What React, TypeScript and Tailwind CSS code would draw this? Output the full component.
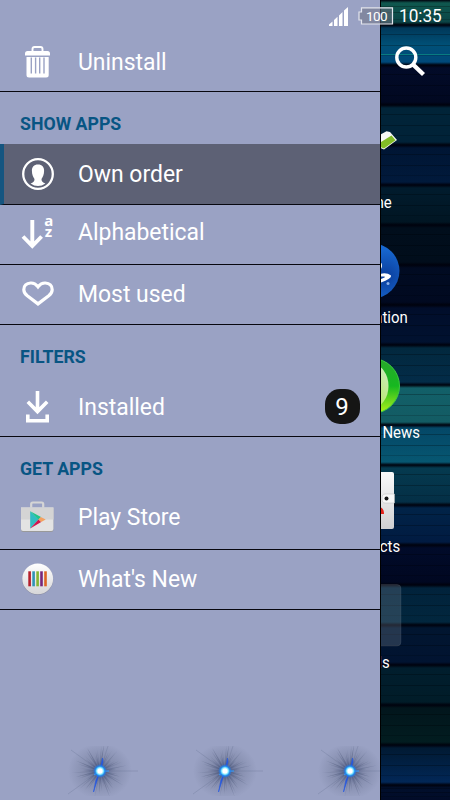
import React, { FC, ReactNode } from "react";

const TrashIcon = (
  <svg width="26" height="32" viewBox="0 0 26 32" fill="#fff">
    <path d="M7.500 5.500V3Q7.500 1 9.500 1H15.500Q17.500 1 17.500 3V5.500" fill="none" stroke="#fff" strokeWidth="1.900" />
    <path d="M2.500 5H22.500Q25 5 25 7.500V9.500H0V7.500Q0 5 2.500 5Z" />
    <path
      fillRule="evenodd"
      d="M1.500 11H23.700V29Q23.700 31.500 21.200 31.500H4Q1.500 31.500 1.500 29ZM5.600 11.500V27.500H7V11.500ZM9.900 11.500V27.500H11.300V11.500ZM14 11.500V27.500H15.400V11.500ZM18.300 11.500V27.500H19.700V11.500Z"
    />
  </svg>
);

const PersonIcon = (
  <svg width="32" height="32" viewBox="0 0 32 32" fill="#fff">
    <circle cx="16" cy="16" r="14.800" fill="none" stroke="#fff" strokeWidth="2.300" />
    <path d="M16 6.500C11.900 6.500 9.800 9.200 9.900 12.800C9.900 16.800 11.300 19.300 12.500 21C12.700 23.500 11.200 24.400 8.600 25.500Q12 28 16 28Q20 28 23.400 25.500C20.800 24.400 19.300 23.500 19.500 21C20.700 19.300 22.100 16.800 22.100 12.800C22.200 9.200 20.100 6.500 16 6.500Z" />
  </svg>
);

const SortIcon = (
  <svg width="34" height="34" viewBox="0 0 34 34" fill="none" stroke="#fff">
    <path d="M11.300 5V31M2 21.500L11.300 31L20.600 21.500" strokeWidth="3.900" />
    <text x="23.300" y="10.800" fill="#fff" stroke="none" fontSize="15" fontWeight="700" fontFamily="Noto Sans, sans-serif">a</text>
    <text x="23.700" y="22" fill="#fff" stroke="none" fontSize="15" fontWeight="700" fontFamily="Noto Sans, sans-serif">z</text>
  </svg>
);

const HeartIcon = (
  <svg width="32" height="26" viewBox="0 0 32 26" fill="none" stroke="#fff" strokeWidth="3.200">
    <path d="M16 5.800C13.500 2.600 11.200 1.800 8.600 2C4.500 2.300 1.700 4.700 1.800 8.700C1.900 11.300 3.300 13.200 5.300 14.800L16 22.900L26.700 14.800C28.700 13.200 30.100 11.300 30.200 8.700C30.300 4.700 27.500 2.300 23.400 2C20.800 1.800 18.500 2.600 16 5.800Z" />
  </svg>
);

const DownloadIcon = (
  <svg width="24" height="32" viewBox="0 0 24 32" fill="none" stroke="#fff" strokeWidth="3.600">
    <path d="M11.500 0V20.500M1.800 10.800L11.500 20.600L21.200 10.800" />
    <path d="M1.800 23.500V29.800H21.200V23.500" />
  </svg>
);

const PlayStoreIcon = (
  <svg width="34" height="32" viewBox=".8 .5 34 32">
    <path d="M11 7V3.500Q11 2 12.500 2H21.500Q23 2 23 3.500V7" fill="none" stroke="#d5d5d5" strokeWidth="2.200" />
    <path d="M.8 8H33.200V29Q33.200 31.500 30.700 31.500H3.300Q.8 31.500 .8 29Z" fill="#999" />
    <path d="M.8 7H33.200V28.500Q33.200 30.500 31.200 30.500H2.800Q.8 30.500 .8 28.500Z" fill="#e3e3e3" />
    <path d="M.8 7H33.200V19H.8Z" fill="#d4d4d4" />
    <path d="M10 10.800V28L18.500 19Z" fill="#30bdc2" />
    <path d="M10 10.800L20.800 16.600L18.300 19.200Z" fill="#20c58b" />
    <path d="M10 28L18.300 19.100L21 21.500Z" fill="#d0164f" />
    <path d="M20.600 16.500L25.500 19.100L21 21.600L18.200 19.100Z" fill="#f3a160" />
  </svg>
);

const WhatsNewIcon = (
  <svg width="32" height="32" viewBox="0 0 32 32">
    <defs>
      <linearGradient id="disc" x2="0" y2="1">
        <stop stopColor="#fff" />
        <stop offset="1" stopColor="#d6d6d8" />
      </linearGradient>
    </defs>
    <circle cx="15.700" cy="16.400" r="15.400" fill="#85889d" />
    <circle cx="15.700" cy="15.800" r="15.400" fill="url(#disc)" />
    <rect x="6.300" y="8.300" width="2.600" height="15" fill="#b51f2b" />
    <rect x="10.300" y="8.300" width="2.600" height="15" fill="#3193b6" />
    <rect x="14.300" y="8.300" width="2.600" height="15" fill="#86b633" />
    <rect x="18.200" y="8.300" width="2.600" height="15" fill="#77277c" />
    <rect x="22.200" y="8.300" width="2.600" height="15" fill="#dd6524" />
  </svg>
);

type RowProps = {
  icon: ReactNode;
  label: string;
  active?: boolean;
  badge?: string;
  shift?: string;
};

const Row: FC<RowProps> = ({ icon, label, active, badge, shift = "" }) => (
  <div
    className={`flex shrink-0 items-center border-b border-b-[#08080f] ${
      active ? "h-[61px] border-l-4 border-l-[#155580] bg-[#5d6175]" : "h-15"
    }`}
  >
    <div className={`flex w-full items-center ${shift}`}>
      <div className={`flex w-[34px] shrink-0 justify-center ${active ? "ml-[17px]" : "ml-[21px]"}`}>
        {icon}
      </div>
      <span className="ml-[22.5px] origin-left scale-x-[0.955] text-[24px] leading-8">{label}</span>
      {badge && (
        <span className="mr-[20.5px] ml-auto flex h-[35px] w-[35px] items-center justify-center rounded-[15px] bg-[#151515] text-[24px]">
          {badge}
        </span>
      )}
    </div>
  </div>
);

const Heading: FC<{ children: ReactNode; size?: string }> = ({ children, size = "h-[52px] pt-2.5" }) => (
  <h2 className={`flex shrink-0 items-center pl-5 text-[18px] font-bold text-[#085583] ${size}`}>
    <span className="origin-left scale-x-[0.985]">{children}</span>
  </h2>
);

// [angle, length, opacity] of the grey rays around each spark
const rays = Array.from({ length: 48 }, (_, i) => [
  i * 7.5 + ((i * 13) % 5),
  15 + ((i * 17) % 14),
  0.14 + ((i * 7) % 5) * 0.05,
]);

const Spark: FC = () => (
  <svg width="125" height="50" viewBox="0 0 125 50" className="shrink-0">
    <defs>
      <radialGradient id="haze">
        <stop stopColor="#4f5d88" stopOpacity=".8" />
        <stop offset=".5" stopColor="#68718f" stopOpacity=".38" />
        <stop offset="1" stopColor="#68718f" stopOpacity="0" />
      </radialGradient>
      <radialGradient id="core">
        <stop offset=".3" stopColor="#fff" />
        <stop offset=".5" stopColor="#7be4ff" />
        <stop offset=".7" stopColor="#168cff" stopOpacity=".8" />
        <stop offset="1" stopColor="#2379ff" stopOpacity="0" />
      </radialGradient>
    </defs>
    <ellipse cx="60" cy="25" rx="32" ry="28" fill="url(#haze)" />
    {rays.map(([angle, length, opacity], i) => (
      <path
        key={i}
        d={`M60 26L${60 + length} 25L60 24Z`}
        transform={`rotate(${angle} 60 25)`}
        fill="#3b4567"
        opacity={opacity}
      />
    ))}
    <path d="M60 25L28 48M60 25L31 4M60 25L68 0M60 25H98" stroke="#535f80" strokeWidth=".6" opacity=".35" />
    <path d="M60 25L53.500 46L56 34ZM60 25L62.500 12L63 16Z" fill="#174eea" stroke="#1d55e6" strokeWidth=".7" opacity=".85" />
    <path d="M54 29L60 25H69" stroke="#2e9cff" strokeWidth="1" fill="none" />
    <circle cx="60" cy="25" r="7" fill="url(#core)" />
  </svg>
);

const StatusBar: FC = () => (
  <div className="absolute inset-x-0 top-0 flex h-8 items-start text-white">
    <svg width="21" height="20" viewBox="0 0 21 20" className="mt-[7px] ml-[328px]" fill="#fff">
      <path d="M1 19V17.500L4.500 14.500V19ZM6 19V13L9.500 9.800V19ZM11 19V8.500L14.500 5V19ZM16 19V3.600L20 0V19Z" />
    </svg>
    <svg width="36" height="19" viewBox="0 0 36 19" className="mt-[7px] ml-[9px]">
      <path
        d="M3.500 .8H34.500V17H3.500V13H1V5H3.500Z"
        fill="#707285"
        fillOpacity=".55"
        stroke="#e3e5ed"
        strokeWidth="1.200"
      />
      <text x="18.500" y="13.700" textAnchor="middle" fontSize="13.500" letterSpacing="-.6" fill="#fff" fontFamily="Roboto, sans-serif">100</text>
    </svg>
    <span className="mt-[4px] ml-[5px] origin-left scale-x-[0.98] text-[17.500px] leading-6">10:35</span>
  </div>
);

const bands = [
  "h-[25px] from-[#105b50] to-[#0a4144]",
  "h-10 from-[#003454] via-[#005077] to-[#00477a]",
  "h-10 from-[#020b29] to-[#010820]",
  "h-10 from-[#012438] to-[#012238]",
  "h-10 from-[#001533] to-[#011a3c]",
  "h-10 from-[#011c2e] to-[#011522]",
  "h-10 from-[#010e1c] to-[#010d1b]",
  "h-10 from-[#010b22] to-[#010920]",
  "h-10 from-[#010d2a] to-[#011230]",
  "h-10 from-[#02283d] to-[#032c49]",
  "h-10 from-[#126069] to-[#135b63]",
  "h-10 from-[#044666] to-[#075872]",
  "h-10 from-[#053b50] to-[#042e45]",
  "h-10 from-[#012448] to-[#011a41]",
  "h-10 from-[#010b2a] to-[#000720]",
  "h-10 from-[#01223b] to-[#02273e]",
  "h-10 from-[#011630] to-[#011331]",
  "h-10 from-[#011e2e] to-[#011c28]",
  "h-10 from-[#02151c] to-[#021d20]",
  "h-10 from-[#011930] to-[#02285a]",
  "h-[15px] from-[#01102d] to-[#010b28]",
];

const Wallpaper: FC = () => (
  <div className="absolute inset-0 isolate overflow-hidden">
    {bands.map((band) => (
      <div key={band} className={`relative flex flex-col justify-evenly bg-linear-to-b ${band}`}>
        <div className="absolute inset-x-0 -top-[3px] z-10 h-[6px] bg-linear-to-b from-transparent via-[#00020d] to-transparent" />
        <div className="h-px bg-black/25" />
        <div className="h-px bg-black/25" />
        <div className="h-px bg-black/15" />
      </div>
    ))}
    <div className="absolute inset-x-0 top-[54px] h-px bg-[#087c81]" />
  </div>
);

const AppLabel: FC<{ children: string; className: string }> = ({ children, className }) => (
  <span
    className={`absolute origin-right scale-x-[0.88] text-[17px] leading-5 whitespace-nowrap ${className}`}
  >
    {children}
  </span>
);

// the slice of the home screen that stays visible beside the drawer
const HomeScreen: FC = () => (
  <div className="relative h-full w-[70px] overflow-hidden border-l border-black bg-[#010b22] text-white">
    <Wallpaper />
    <svg width="69" height="800" viewBox="381 0 69 800" className="absolute inset-0">
      <defs>
        <radialGradient id="ps" cx=".75" cy=".6">
          <stop stopColor="#0b3d9b" />
          <stop offset="1" stopColor="#1767cf" />
        </radialGradient>
        <linearGradient id="ring" x2="0" y2="1">
          <stop stopColor="#29a82b" />
          <stop offset=".5" stopColor="#16b820" />
          <stop offset="1" stopColor="#b4f21a" />
        </linearGradient>
        <linearGradient id="leaf" x1="1" x2="0" y2="1">
          <stop stopColor="#d0edca" />
          <stop offset="1" stopColor="#a7e530" />
        </linearGradient>
        <linearGradient id="book" x2="0" y2="1">
          <stop stopColor="#fafafa" />
          <stop offset="1" stopColor="#cfcfd1" />
        </linearGradient>
      </defs>
      <circle cx="406.300" cy="57.500" r="9.500" fill="none" stroke="#fff" strokeWidth="3.400" />
      <path d="M413 64.500L423.500 74.500" stroke="#fff" strokeWidth="4.400" />
      <path d="M374 138L386.500 131.300L390 132L397 140L384 149.500L376 146Z" fill="#f7f8f5" />
      <path d="M376 145L391.500 135.500L395.500 140.200L384 148.500Z" fill="#82bd27" />
      <circle cx="372" cy="271" r="27.500" fill="url(#ps)" />
      <path d="M375 260Q382 260 382 266Q382 270 375 270" fill="#fff" />
      <path d="M376 275Q386 271.500 391 275.500Q392 278.500 380 283L376 284V280.500Q388 277 384 276.500Q380 276 376 279Z" fill="#fff" />
      <circle cx="388" cy="283.500" r="1.500" fill="#8cb1ea" />
      <circle cx="372" cy="386" r="27.500" fill="url(#ring)" stroke="#3dcb40" />
      <ellipse cx="372" cy="386" rx="16.500" ry="22" fill="url(#leaf)" />
      <rect x="360" y="472" width="34" height="57" rx="2" fill="url(#book)" />
      <path d="M394.500 494H385Q382 494 382 498.500Q382 503 385 503H394.500Z" fill="#f7f7f7" stroke="#bbb" strokeWidth=".5" />
      <circle cx="386.500" cy="498.500" r="2" fill="#151515" />
      <path d="M376 507Q384 506 384 514H376Z" fill="#e32118" />
      <rect x="360" y="584.500" width="41" height="61.500" rx="4" fill="#8490a0" fillOpacity=".27" stroke="#a2acb8" strokeOpacity=".12" />
    </svg>
    <AppLabel className="top-[192px] right-[58px]">Home</AppLabel>
    <AppLabel className="top-[307px] right-[42px]">PlayStation</AppLabel>
    <AppLabel className="top-[422px] right-[30px]">Socialife News</AppLabel>
    <AppLabel className="top-[536px] right-[50px]">Contacts</AppLabel>
    <AppLabel className="top-[652px] right-[60px]">Tools</AppLabel>
  </div>
);

const App: FC = () => {
  return (
    <div className="relative flex h-[800px] w-[450px] overflow-hidden font-['Roboto',sans-serif]">
      <aside className="flex h-full w-[380px] shrink-0 flex-col bg-[#9aa2c4] pt-8 text-white">
        <Row icon={TrashIcon} label="Uninstall" />
        <Heading>SHOW APPS</Heading>
        <Row icon={PersonIcon} label="Own order" active />
        <Row icon={SortIcon} label="Alphabetical" shift="-mt-1.5" />
        <Row icon={HeartIcon} label="Most used" shift="-mt-0.5" />
        <Heading>FILTERS</Heading>
        <Row icon={DownloadIcon} label="Installed" badge="9" />
        <Heading size="h-[53px] pt-[9px]">GET APPS</Heading>
        <Row icon={PlayStoreIcon} label="Play Store" shift="-mt-1.5" />
        <Row icon={WhatsNewIcon} label="What's New" shift="-mt-0.5" />
        <div className="mt-auto mb-[4px] flex overflow-hidden pl-[40px]">
          <Spark />
          <Spark />
          <Spark />
        </div>
      </aside>
      <HomeScreen />
      <StatusBar />
    </div>
  );
};

export default App;
